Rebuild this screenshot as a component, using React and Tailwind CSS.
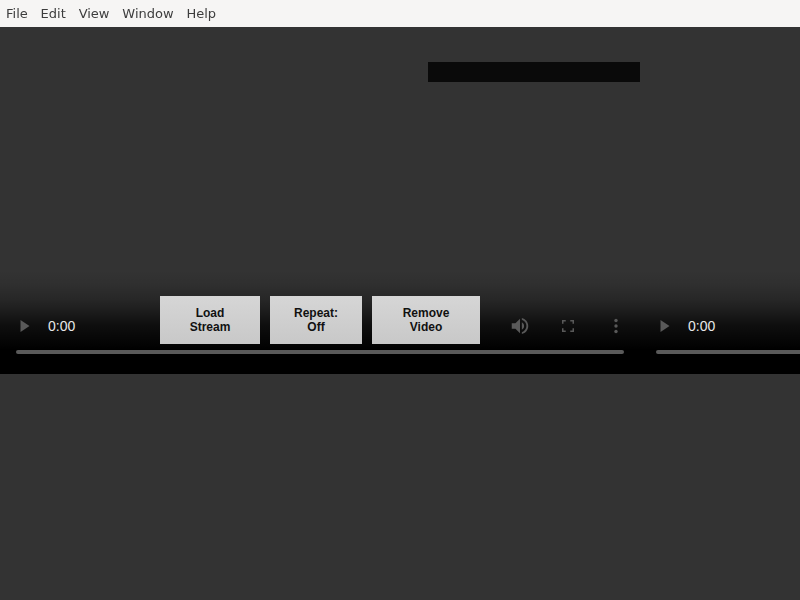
import React from 'react';

const MENU = ['File', 'Edit', 'View', 'Window', 'Help'];

function Player({ showRight }) {
  return (
    <div className="relative w-[640px] h-[347px] shrink-0 flex flex-col justify-end">
      <div className="h-[104px] bg-[linear-gradient(to_bottom,rgba(0,0,0,0)_0%,rgba(0,0,0,0.08)_14%,rgba(0,0,0,0.25)_29%,rgba(0,0,0,0.45)_40%,rgba(0,0,0,0.72)_53%,rgba(0,0,0,1)_77%)] flex flex-col justify-end">
        <div className="flex items-center h-[48px] px-[16px]">
          <svg width="18" height="18" viewBox="0 0 18 18" className="shrink-0">
            <path d="M4.5 3v12l9-6z" fill="#595959" />
          </svg>
          <span className="ml-[14px] text-[14px] text-[#e8e8e8] font-['Liberation_Sans',sans-serif]">0:00</span>
          {showRight && (
            <div className="ml-auto flex items-center">
              <svg width="22" height="22" viewBox="0 0 24 24" className="mr-[29px]">
                <path
                  d="M3 9v6h4l5 5V4L7 9H3zm13.5 3c0-1.77-1.02-3.29-2.5-4.03v8.05c1.48-.73 2.5-2.25 2.5-4.02zM14 3.23v2.06c2.89.86 5 3.54 5 6.71s-2.11 5.85-5 6.71v2.06c4.01-.91 7-4.49 7-8.77s-2.99-7.86-7-8.77z"
                  fill="#595959"
                />
              </svg>
              <svg width="16" height="16" viewBox="0 0 16 16" className="mr-[32px]">
                <path
                  d="M2.75 5.75v-3h3M10.25 2.75h3v3M13.25 10.25v3h-3M5.75 13.25h-3v-3"
                  fill="none"
                  stroke="#595959"
                  strokeWidth="1.5"
                />
              </svg>
              <svg width="16" height="16" viewBox="0 0 16 16">
                <circle cx="8" cy="2.5" r="1.7" fill="#595959" />
                <circle cx="8" cy="8" r="1.7" fill="#595959" />
                <circle cx="8" cy="13.5" r="1.7" fill="#595959" />
              </svg>
            </div>
          )}
        </div>
        <div className="px-[16px] h-[4px] mb-[20px]">
          <div className="h-[4px] bg-[#5a5a5a] rounded-full" />
        </div>
      </div>
    </div>
  );
}

function ControlButton({ children, width }) {
  return (
    <button className={`${width} h-[48px] bg-gradient-to-b from-[#d6d6d6] to-[#c8c8c8] text-[12px] leading-[14px] font-bold text-[#111] font-['Liberation_Sans',sans-serif]`}>
      {children}
    </button>
  );
}

export default function App() {
  return (
    <div className="w-[800px] h-[600px] overflow-hidden bg-[#333333] flex flex-col">
      {/* MENU */}
      <div className="h-[27px] bg-[#f6f5f4] flex items-center">
        <div className="flex items-center gap-[12.85px] px-[6px] text-[13px] text-[#3d3d3d] font-['DejaVu_Sans',sans-serif] will-change-transform">
          {MENU.map((m) => (
            <span key={m}>{m}</span>
          ))}
        </div>
      </div>

      {/* VIDEOS */}
      <div className="relative flex">
        <Player showRight />
        <Player />

        <div className="absolute left-[428px] top-[35px] w-[212px] h-[20px] bg-[#0a0a0a]" />

        <div className="absolute left-[160px] top-[269px] flex gap-[10px]">
          <ControlButton width="w-[100px]">Load<br />Stream</ControlButton>
          <ControlButton width="w-[92px]">Repeat:<br />Off</ControlButton>
          <ControlButton width="w-[108px]">Remove<br />Video</ControlButton>
        </div>
      </div>
    </div>
  );
}
